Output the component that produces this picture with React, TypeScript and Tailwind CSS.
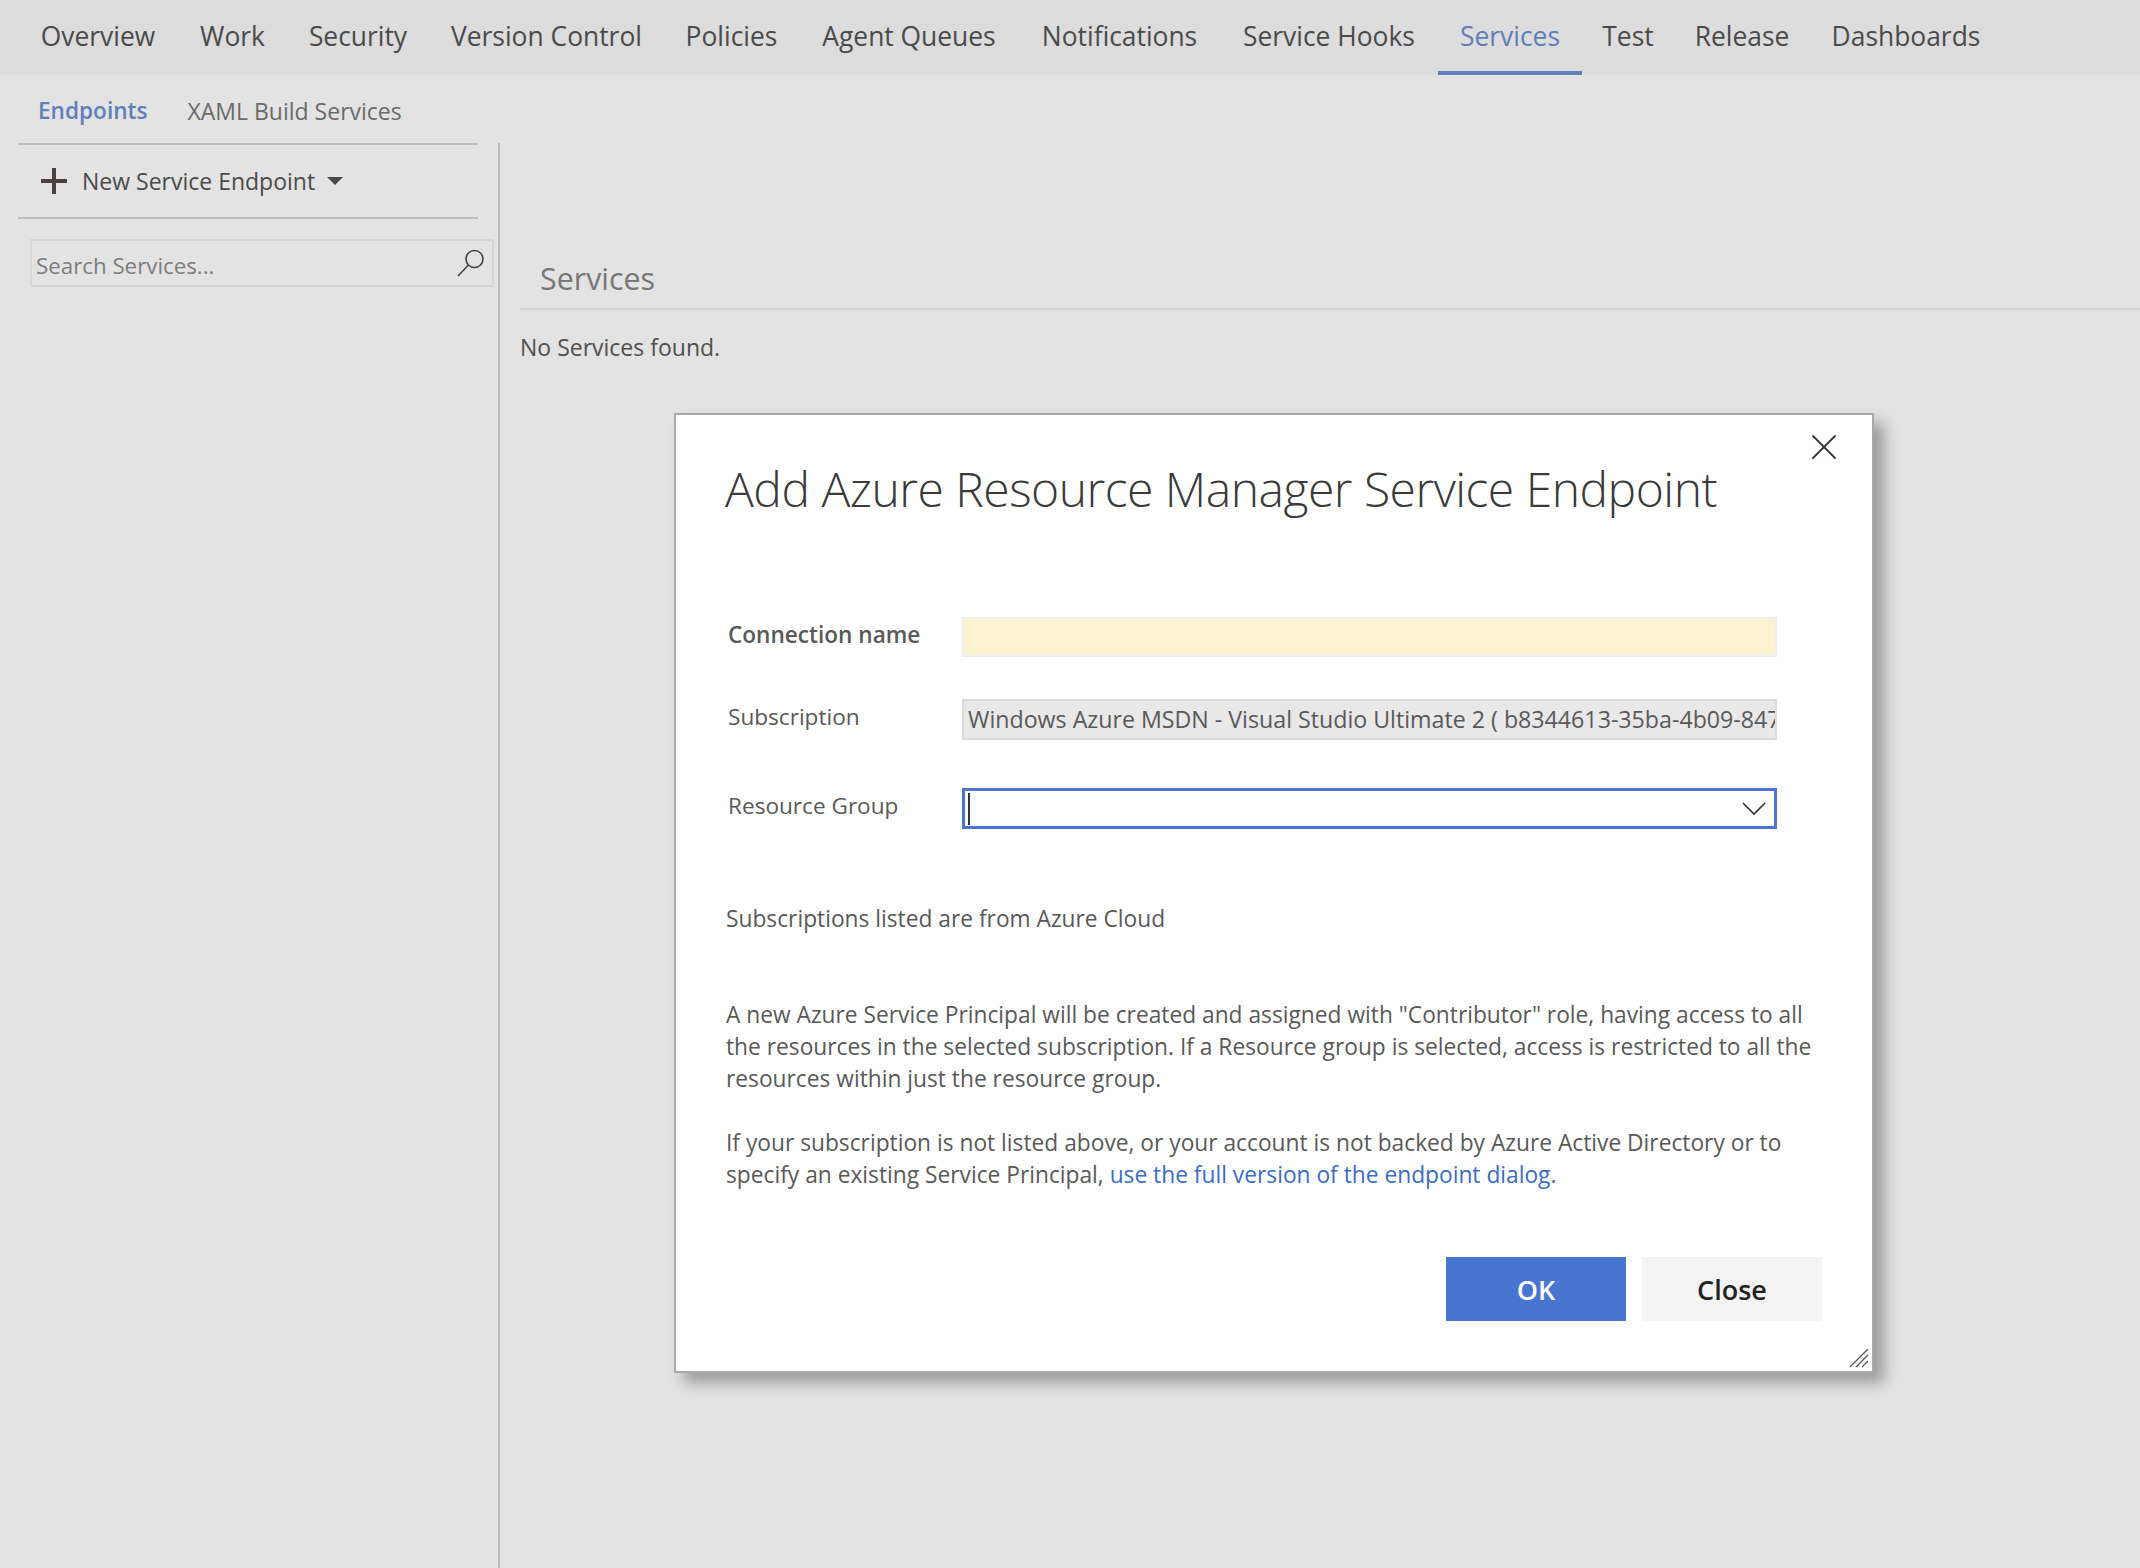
import { X } from 'lucide-react';

const tabs = [
  { name: 'Overview', width: 'w-[160px]' },
  { name: 'Work', width: 'w-[109px]' },
  { name: 'Security', width: 'w-[142px]' },
  { name: 'Version Control', width: 'w-[235px]' },
  { name: 'Policies', width: 'w-[135px]' },
  { name: 'Agent Queues', width: 'w-[220px]' },
  { name: 'Notifications', width: 'w-[201px]' },
  { name: 'Service Hooks', width: 'w-[218px]' },
  { name: 'Services', width: 'w-[144px]' },
  { name: 'Test', width: 'w-[92px]' },
  { name: 'Release', width: 'w-[136px]' },
  { name: 'Dashboards', width: 'w-[192px]' },
];

function SearchIcon() {
  return (
    <svg width="30" height="30" viewBox="0 0 30 30" fill="none" stroke="#444" strokeWidth="1.6" className="-mt-[2px] -ml-[1px]">
      <circle cx="18.5" cy="11" r="8.5" />
      <path d="M12.5 17 L2 28" />
    </svg>
  );
}

function ResizeGrip() {
  return (
    <svg width="20" height="20" viewBox="0 0 20 20" stroke="#555" strokeWidth="1.2" className="absolute right-[3px] bottom-[3px]">
      <path d="M1 19 L19 1 M7 19 L19 7 M13 19 L19 13" />
    </svg>
  );
}

function Field({ label, bold, children }: { label: string; bold?: boolean; children: React.ReactNode }) {
  return (
    <div className="flex items-center">
      <div className={`w-[238px] pl-[4px] text-[22.6px] ${bold ? '-mt-[4px] font-semibold' : '-mt-[6px]'}`}>{label}</div>
      {children}
    </div>
  );
}

export default function App() {
  return (
    <div className="relative h-[1568px] w-[2140px] overflow-hidden bg-[#e3e3e3] text-[#595959] font-['Open_Sans',sans-serif]">
      {/* top nav */}
      <div className="flex h-[75px] bg-[#dcdcdc] pl-[18px] text-[26.4px] text-[#4a4a4a]">
        {tabs.map((t) => (
          <div
            key={t.name}
            className={`flex items-center justify-center pt-[2px] border-b-4 ${t.width} ${
              t.name === 'Services' ? 'border-[#5f7fb8] text-[#5f7fb8]' : 'border-transparent'
            }`}
          >
            {t.name}
          </div>
        ))}
      </div>

      {/* sub tabs */}
      <div className="flex h-[68px] items-center gap-[40px] pl-[38px] pt-[4px]">
        <span className="text-[22.6px] font-semibold text-[#5f7fba]">Endpoints</span>
        <span className="text-[23px] text-[#6a6a6a]">XAML Build Services</span>
      </div>

      <div className="flex h-[1425px]">
        {/* left pane */}
        <div className="w-[500px] border-r-2 border-[#bdbdbd] pl-[18px]">
          <div className="flex h-[76px] w-[460px] items-center border-y-2 border-[#bdbdbd] pl-[23px] text-[23px] text-[#4a4a4a]">
            <span className="relative h-[26px] w-[26px]">
              <span className="absolute left-0 top-[11px] h-[4px] w-[26px] bg-[#4a4040]" />
              <span className="absolute left-[11px] top-0 h-[26px] w-[4px] bg-[#4a4040]" />
            </span>
            <span className="ml-[15px] pt-[1px]">New Service Endpoint</span>
            <span className="ml-[12px] h-0 w-0 border-x-[8px] border-t-[8px] border-x-transparent border-t-[#4a4a4a]" />
          </div>
          <div className="ml-[12px] mt-[20px] flex h-[48px] w-[464px] items-center justify-between border-2 border-[#d6d6d6] pl-[4px] pr-[6px] text-[22.3px] text-[#7d7d7d]">
            <span className="pt-[5px]">Search Services...</span>
            <span className="pt-[2px]">
              <SearchIcon />
            </span>
          </div>
        </div>

        {/* right pane */}
        <div className="flex-1 pl-[20px]">
          <div className="mt-[113px] border-b-2 border-[#d0d0d0] pb-[6px] pl-[20px] text-[30.4px] text-[#777]">Services</div>
          <div className="mt-[20px] text-[23px] text-[#4f4f4f]">No Services found.</div>
        </div>
      </div>

      {/* dialog */}
      <div className="absolute left-[674px] top-[413px] h-[960px] w-[1200px] border-2 border-[#a9a9a9] bg-white px-[48px] shadow-[10px_10px_14px_rgba(0,0,0,0.32)]">
        <X className="absolute right-[26px] top-[10px] h-[44px] w-[44px] text-[#333]" strokeWidth={1} />
        <h1 className="ml-[1px] mt-[42px] text-[48px] font-light leading-[64px] tracking-[-0.5px] text-[#3a3a3a]">Add Azure Resource Manager Service Endpoint</h1>

        <div className="mt-[96px] flex flex-col">
          <Field label="Connection name" bold>
            <div className="h-[40px] w-[815px] border-2 border-[#eeeeee] bg-[#fbf2cf]" />
          </Field>
          <div className="mt-[42px]">
            <Field label="Subscription">
              <div className="h-[41px] w-[815px] overflow-hidden whitespace-nowrap border-2 border-[#dcdcdc] bg-[#e8e8e8] pl-[4px] text-[23.2px] leading-[37px]">
                Windows Azure MSDN - Visual Studio Ultimate 2 ( b8344613-35ba-4b09-847
              </div>
            </Field>
          </div>
          <div className="mt-[48px]">
            <Field label="Resource Group">
              <div className="flex h-[41px] w-[815px] items-center justify-between border-[3px] border-[#4a76d0] pl-[3px] pr-[8px]">
                <span className="h-[32px] w-[2px] bg-[#333]" />
                <svg width="24" height="14" viewBox="0 0 24 14" fill="none" stroke="#333" strokeWidth="1.6">
                  <path d="M1 1 L12 12 L23 1" />
                </svg>
              </div>
            </Field>
          </div>
        </div>

        <div className="pl-[2px] text-[22.75px] leading-[32px]">
          <p className="mt-[74px]">Subscriptions listed are from Azure Cloud</p>
          <p className="mt-[64px]">
            A new Azure Service Principal will be created and assigned with "Contributor" role, having access to all the resources in the selected subscription. If a Resource group is selected, access is restricted to all the resources within just the resource group.
          </p>
          <p className="mt-[32px]">
            If your subscription is not listed above, or your account is not backed by Azure Active Directory or to specify an existing Service Principal, <span className="text-[#3a6cc8]">use the full version of the endpoint dialog.</span>
          </p>
        </div>

        <div className="absolute bottom-[50px] right-[50px] flex gap-[16px] text-[27px] font-semibold">
          <div className="flex h-[64px] w-[180px] items-center justify-center bg-[#4875d0] pt-[2px] text-white">OK</div>
          <div className="flex h-[64px] w-[180px] items-center justify-center bg-[#f3f3f3] pt-[2px] text-[#222]">Close</div>
        </div>
        <ResizeGrip />
      </div>
    </div>
  );
}
